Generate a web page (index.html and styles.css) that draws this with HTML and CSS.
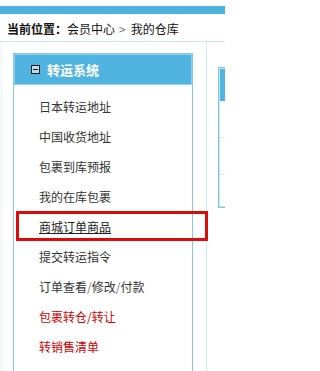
FILE: index.html
```html
<!DOCTYPE html>
<html>
<head>
<meta charset="utf-8">
<link rel="stylesheet" href="styles.css">
</head>
<body>
<div class="page">
  <div class="topbar"></div>
  <div class="crumb"><b>当前位置：</b>会员中心<span class="gt">&gt;</span>我的仓库</div>
  <div class="main">
    <div class="left">
      <div class="panel">
        <div class="panel-head">
          <svg class="ico" width="9" height="9" viewBox="0 0 9 9"><rect x="0.5" y="0.5" width="8" height="8" fill="#c3dbe8" stroke="#1a1a1a"/><line x1="2" y1="4.5" x2="7" y2="4.5" stroke="#1a1a1a"/></svg>
          <span>转运系统</span>
        </div>
        <ul class="menu">
          <li>日本转运地址</li>
          <li>中国收货地址</li>
          <li>包裹到库预报</li>
          <li>我的在库包裹</li>
          <li class="hover">商城订单商品</li>
          <li>提交转运指令</li>
          <li>订单查看<span class="sl">/</span>修改<span class="sl">/</span>付款</li>
          <li class="red">包裹转仓/转让</li>
          <li class="red">转销售清单</li>
          <li class="red">退货转送</li>
        </ul>
      </div>
    </div>
    <div class="right">
      <div class="rpanel">
        <div class="rhead"></div>
        <div class="rrow"></div>
        <div class="rrow"></div>
        <div class="rrow last"></div>
      </div>
    </div>
  </div>
  <div class="highlight"></div>
</div>
</body>
</html>
```
FILE: styles.css
```css
html, body {
  margin: 0;
  padding: 0;
  background: #fff;
}
body {
  width: 225px;
  height: 371px;
  overflow: hidden;
  font-family: "Noto Sans CJK SC", "Noto Sans", sans-serif;
  font-size: 12px;
  color: #222;
}
.page {
  position: relative;
  width: 225px;
  height: 371px;
  overflow: hidden;
}
.topbar {
  margin-top: 6px;
  height: 8px;
  background: #4db2de;
}
.crumb {
  height: 24px;
  padding-top: 3px;
  line-height: 24px;
  padding-left: 7px;
  border-bottom: 1px solid #cde8f4;
  white-space: nowrap;
  color: #111;
}
.crumb b {
  font-weight: bold;
}
.crumb .gt {
  color: #777;
  display: inline-block;
  margin: 0 5px 0 4px;
}
.main {
  display: flex;
  margin-left: 1px;
  border-left: 1px solid #e6f3f9;
  height: 340px;
}
.left {
  width: 204px;
  flex: none;
  border-right: 1px solid #cfe9f5;
}
.panel {
  margin-top: 11px;
  margin-left: 11px;
  width: 178px;
  border: 1px solid #86c7e5;
  height: 400px;
}
.panel-head {
  height: 31px;
  background: #4fb4df;
  box-shadow: inset 0 0 0 1px #8dd0ee;
  display: flex;
  align-items: center;
  padding-left: 17px;
  gap: 7px;
  color: #fff;
  font-weight: bold;
  font-size: 13px;
}
.ico {
  display: block;
  flex: none;
}
.menu {
  list-style: none;
  margin: 0;
  padding: 7px 0 0 0;
}
.menu li {
  height: 30px;
  line-height: 30px;
  padding-left: 25px;
  color: #333;
  white-space: nowrap;
}
.menu li .sl {
  color: #777;
}
.menu li.hover {
  text-decoration: underline;
  color: #222;
}
.menu li.red {
  color: #d30000;
}
.right {
  flex: 1;
  padding-left: 11px;
  padding-top: 25px;
}
.rpanel {
  width: 60px;
  border: 1px solid #7cc3e4;
  box-shadow: inset 0 0 0 1px #c5e6f5;
}
.rhead {
  height: 32px;
  background: #4fb4df;
  margin: 1px 0 0 1px;
}
.rrow {
  height: 36px;
  border-bottom: 1px solid #d6ebf5;
}
.rrow.last {
  height: 32px;
  border-bottom: none;
}
.highlight {
  position: absolute;
  left: 16px;
  top: 211px;
  width: 186px;
  height: 24px;
  border: 3px solid #dd0a0a;
}
```
